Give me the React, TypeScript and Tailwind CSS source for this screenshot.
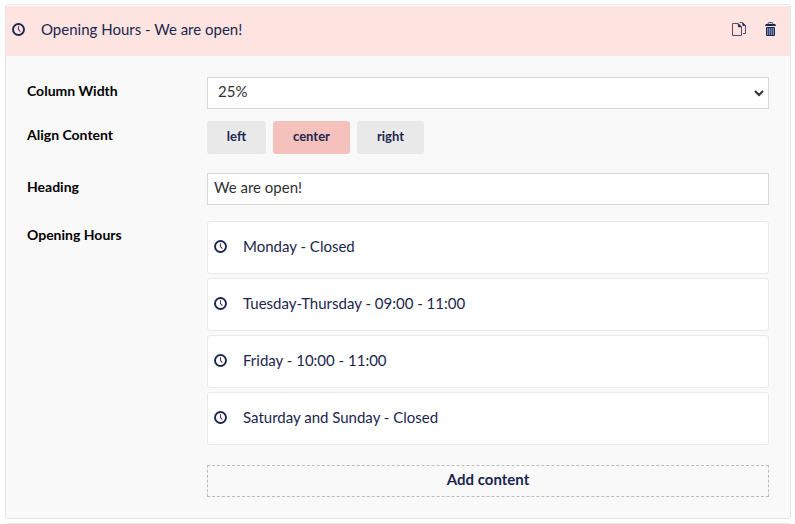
import type { ReactNode } from "react";

function Clock() {
  return (
    <svg className="block h-[13px] w-[13px] shrink-0" viewBox="0 0 13 13" fill="none">
      <circle cx="6.5" cy="6.5" r="5.5" stroke="#1b264f" strokeWidth="1.9" />
      <path d="M6.5 3.2V6.6L8.4 8.7" stroke="#57306f" strokeWidth="1.1" />
    </svg>
  );
}

function CopyIcon() {
  return (
    <svg className="block h-[14px] w-[15px]" viewBox="0 0 15 14" fill="none" stroke="#5f4866" strokeWidth="1">
      <path d="M0.5 1.5H6L9.5 5V13.5H0.5Z" />
      <path d="M6 1.5L9.5 5H6.5Z" fill="#1b264f" stroke="#1b264f" strokeWidth="0.6" />
      <path d="M7.5 0.5H10.5L13.5 3.5V11.5H11" />
      <path d="M10.5 0.8L13.3 3.6H10.8Z" fill="#1b264f" stroke="#1b264f" strokeWidth="0.6" />
    </svg>
  );
}

function TrashIcon() {
  return (
    <svg className="block h-[14px] w-[11px]" viewBox="0 0 11 14" fill="none">
      <path d="M3 1.8Q3.2 0.6 4.2 0.6H6.8Q7.8 0.6 8 1.8" stroke="#1b264f" strokeWidth="0.9" />
      <path d="M0.8 2H10.2L11 4H0Z" fill="#1b264f" />
      <path d="M1.5 5.5H9.5V13.5H1.5Z" fill="#8a87a3" stroke="#1b264f" />
      <path d="M3.5 6V13M5.5 6V13M7.5 6V13" stroke="#2c4a86" strokeWidth="1" />
    </svg>
  );
}

function Row({ label, className, children }: { label: string; className: string; children: ReactNode }) {
  return (
    <div className={`flex ${className}`}>
      <div className="w-[180px] shrink-0 pt-1 text-[14px] leading-5 font-bold text-black">{label}</div>
      <div className="w-[562px]">{children}</div>
    </div>
  );
}

const hours = [
  "Monday - Closed",
  "Tuesday-Thursday - 09:00 - 11:00",
  "Friday - 10:00 - 11:00",
  "Saturday and Sunday - Closed",
];

export default function App() {
  return (
    <div className="h-[524px] overflow-hidden bg-white pt-1 pl-[5px] font-['Lato',sans-serif] text-[15px] leading-5 text-[#1b264f]">
      <section className="h-[515px] w-[786px] rounded-[3px] border border-[#e5e5e8] bg-[#f9f9f9]">
        <header className="flex h-[51px] items-center border-t border-white bg-[#fee4e1] pr-[14px] pb-[4px] pl-[6px]">
          <Clock />
          <span className="ml-4 flex-1">Opening Hours - We are open!</span>
          <CopyIcon />
          <span className="ml-[18px]">
            <TrashIcon />
          </span>
        </header>
        <div className="pt-[21px] pl-[21px]">
          <Row label="Column Width" className="h-11">
            <div className="flex h-8 items-center justify-between border border-[#d8d7d9] bg-white pr-[4px] pb-[4px] pl-[10px] text-[#303033]">
              <span>25%</span>
              <svg className="mt-[5px] h-[7px] w-[10px]" viewBox="0 0 10 7" fill="none">
                <path d="M1 1L5 5L9 1" stroke="#303033" strokeWidth="2" />
              </svg>
            </div>
          </Row>
          <Row label="Align Content" className="h-[52px]">
            <div className="flex gap-[7px] text-[13px] font-bold">
              <button className="h-[33px] w-[59px] rounded-[3px] bg-[#e9e9e9] pb-[3px]">left</button>
              <button className="h-[33px] w-[77px] rounded-[3px] bg-[#f5c1bc] pb-[3px]">center</button>
              <button className="h-[33px] w-[67px] rounded-[3px] bg-[#e9e9e9] pb-[3px]">right</button>
            </div>
          </Row>
          <Row label="Heading" className="h-12">
            <div className="flex h-8 items-center border border-[#d8d7d9] bg-white px-[6px] pb-[4px] text-[#303033]">
              We are open!
            </div>
          </Row>
          <Row label="Opening Hours" className="">
            <div className="flex flex-col gap-1">
              {hours.map((text) => (
                <div key={text} className="flex h-[53px] items-center gap-4 rounded-[3px] border border-[#e9e9eb] bg-white pb-[2px] pl-[6px]">
                  <Clock />
                  <span className="pb-px">{text}</span>
                </div>
              ))}
            </div>
            <button className="mt-5 block h-8 w-full border border-dashed border-[#bbbabf] pb-[4px] font-bold">
              Add content
            </button>
          </Row>
        </div>
      </section>
      <div className="mt-1 h-[10px] w-[786px] rounded-[3px] border border-[#e5e5e8]" />
    </div>
  );
}
